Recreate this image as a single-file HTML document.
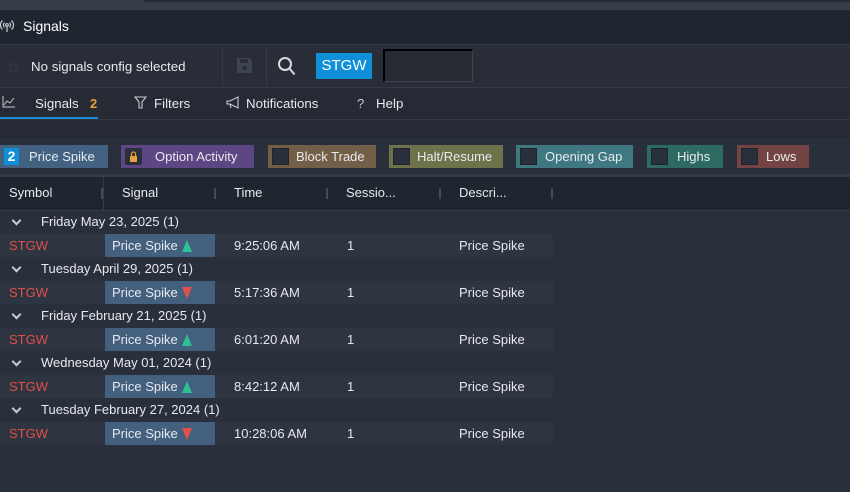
<!DOCTYPE html>
<html><head><style>
*{margin:0;padding:0;box-sizing:border-box}
body{width:850px;height:492px;background:#2a303b;font-family:"Liberation Sans",sans-serif;font-size:13px;color:#e6e9ee;position:relative;overflow:hidden}
.a{position:absolute}
.chip{position:absolute;top:145px;height:23px;line-height:23px;color:#e8ebef;font-size:13px}
.chip .b{position:absolute;left:4px;top:3px;width:17px;height:17px;background:#2a303b;border:1px solid #1f242c}
.hd{position:absolute;top:177px;height:34px;line-height:32px;font-size:13px}
.sep{position:absolute;top:188px;width:2px;height:11px;background:#454c57}
.g{position:absolute;left:0;width:850px;height:23px;line-height:22px;font-size:13px}
.g span.c{position:absolute;left:13px;top:6px;width:7px;height:7px;border-right:2px solid #c8ccd2;border-bottom:2px solid #c8ccd2;transform:rotate(45deg)}
.r{position:absolute;left:0;width:553px;height:23px;line-height:23px;background:#2e3440}
.r div{position:absolute;top:0}
.sig{left:105px;width:110px;height:23px;background:#44607f;padding-left:7px}
.up{display:inline-block;width:0;height:0;border-left:5px solid transparent;border-right:5px solid transparent;border-bottom:12px solid #2fbf95;vertical-align:-2px;margin-left:4px}
.dn{display:inline-block;width:0;height:0;border-left:5px solid transparent;border-right:5px solid transparent;border-top:12px solid #e0504a;vertical-align:-2px;margin-left:4px}
</style></head><body>
<div class="a" style="left:0;top:0;width:850px;height:10px;background:#373e49"></div>
<div class="a" style="left:144px;top:0;width:706px;height:2px;background:#262b35"></div>
<div class="a" style="left:0;top:10px;width:850px;height:34px;background:#202630"></div>
<svg class="a" style="left:0;top:19px" width="14" height="14" viewBox="0 0 14 14" fill="none" stroke="#c8ccd2" stroke-width="1.2"><circle cx="7" cy="6" r="1.3"/><path d="M7 7v6M4.5 3.5a3.5 3.5 0 0 0 0 5M9.5 3.5a3.5 3.5 0 0 1 0 5M2.5 1.5a6 6 0 0 0 0 9M11.5 1.5a6 6 0 0 1 0 9"/></svg>
<div class="a" style="left:23px;top:18px;font-size:14px;color:#fff">Signals</div>
<div class="a" style="left:0;top:44px;width:850px;height:44px;background:#282d37;border-top:1px solid #353b46;border-bottom:1px solid #353b46"></div>
<div class="a" style="left:222px;top:45px;width:1px;height:42px;background:#353b46"></div>
<div class="a" style="left:266px;top:45px;width:1px;height:42px;background:#353b46"></div>
<div class="a" style="left:6px;top:58px;color:#3d4450;font-size:17px">☆</div>
<div class="a" style="left:31px;top:59px;font-size:13.3px">No signals config selected</div>
<svg class="a" style="left:236px;top:57px" width="17" height="17" viewBox="0 0 17 17"><path d="M1 1h12l3 3v12H1z" fill="#3e4550"/><rect x="4" y="2" width="8" height="4" fill="#282d37"/><circle cx="8.5" cy="11" r="2" fill="#282d37"/></svg>
<svg class="a" style="left:277px;top:56px" width="19" height="20" viewBox="0 0 19 20" fill="none" stroke="#d8dce2" stroke-width="2"><circle cx="8" cy="8" r="6"/><path d="M12.5 12.5l5 6"/></svg>
<div class="a" style="left:316px;top:53px;width:56px;height:26px;background:#0f8fd8;color:#fff;font-size:15px;line-height:26px;text-align:center">STGW</div>
<div class="a" style="left:383px;top:49px;width:90px;height:33px;border:1px solid #3e4450;border-left:2px solid #000;border-top:2px solid #000;background:#262b34"></div>
<div class="a" style="left:0;top:88px;width:850px;height:50px;background:#252a34"></div>
<div class="a" style="left:0;top:119px;width:850px;height:1px;background:#353b46"></div>
<div class="a" style="left:0;top:117px;width:98px;height:2px;background:#1b8ad6"></div>
<svg class="a" style="left:2px;top:96px" width="13" height="12" viewBox="0 0 13 12" fill="none" stroke="#c8ccd2" stroke-width="1"><path d="M1 0v11h12M2 9l3-4 3 2 4-5"/></svg>
<div class="a" style="left:35px;top:96px;font-size:13.3px">Signals</div>
<div class="a" style="left:90px;top:96px;color:#e6a03c;font-weight:bold">2</div>
<svg class="a" style="left:134px;top:96px" width="13" height="13" viewBox="0 0 13 13" fill="none" stroke="#c8ccd2" stroke-width="1.1"><path d="M1 1h11L8 6v6H5V6z"/></svg>
<div class="a" style="left:154px;top:96px;font-size:13.3px">Filters</div>
<svg class="a" style="left:226px;top:96px" width="14" height="13" viewBox="0 0 14 13" fill="none" stroke="#c8ccd2" stroke-width="1.1"><path d="M1 5h3l8-4v11L4 8H1zM4 8l1 4"/></svg>
<div class="a" style="left:246px;top:96px;font-size:13.3px">Notifications</div>
<div class="a" style="left:357px;top:96px;color:#c8ccd2">?</div>
<div class="a" style="left:376px;top:96px;font-size:13.3px">Help</div>
<div class="chip" style="left:0;width:108px;background:#436180"><span style="position:absolute;left:4px;top:3px;width:15px;height:17px;background:#0f8fd8;color:#fff;font-weight:bold;text-align:center;line-height:17px;font-size:14px">2</span><span style="position:absolute;left:29px">Price Spike</span></div>
<div class="chip" style="left:121px;width:133px;background:#5c4684"><span style="position:absolute;left:4px;top:3px;width:17px;height:17px;background:#2a2f3a;border-radius:2px"><svg width="17" height="17" viewBox="0 0 17 17"><rect x="5" y="8" width="7" height="6" fill="#e6a03c"/><path d="M6.5 8V6a2 2 0 0 1 4 0v2" fill="none" stroke="#e6a03c" stroke-width="1.2"/></svg></span><span style="position:absolute;left:34px">Option Activity</span></div>
<div class="chip" style="left:268px;width:108px;background:#735f47"><span class="b"></span><span style="position:absolute;left:28px">Block Trade</span></div>
<div class="chip" style="left:389px;width:114px;background:#6d724a"><span class="b"></span><span style="position:absolute;left:28px">Halt/Resume</span></div>
<div class="chip" style="left:516px;width:117px;background:#3f7880"><span class="b"></span><span style="position:absolute;left:29px">Opening Gap</span></div>
<div class="chip" style="left:647px;width:76px;background:#2d6a62"><span class="b"></span><span style="position:absolute;left:30px">Highs</span></div>
<div class="chip" style="left:737px;width:72px;background:#744444"><span class="b"></span><span style="position:absolute;left:29px">Lows</span></div>
<div class="a" style="left:0;top:174px;width:850px;height:3px;background:#363c47"></div>
<div class="a" style="left:0;top:177px;width:850px;height:34px;background:#20262f;border-bottom:1px solid #363c47"></div>
<div class="a" style="left:103px;top:177px;width:1px;height:34px;background:#363c47"></div>
<div class="hd" style="left:9px">Symbol</div><div class="sep" style="left:101px"></div>
<div class="hd" style="left:122px">Signal</div><div class="sep" style="left:214px"></div>
<div class="hd" style="left:234px">Time</div><div class="sep" style="left:326px"></div>
<div class="hd" style="left:346px">Sessio...</div><div class="sep" style="left:439px"></div>
<div class="hd" style="left:459px">Descri...</div><div class="sep" style="left:551px"></div>

<div class="g" style="top:211px"><span class="c"></span><span style="position:absolute;left:41px">Friday May 23, 2025 (1)</span></div>
<div class="r" style="top:234px"><div style="left:9px;color:#e0504a">STGW</div><div class="sig">Price Spike<span class="up"></span></div><div style="left:234px">9:25:06 AM</div><div style="left:347px">1</div><div style="left:459px">Price Spike</div></div>
<div class="g" style="top:258px"><span class="c"></span><span style="position:absolute;left:41px">Tuesday April 29, 2025 (1)</span></div>
<div class="r" style="top:281px"><div style="left:9px;color:#e0504a">STGW</div><div class="sig">Price Spike<span class="dn"></span></div><div style="left:234px">5:17:36 AM</div><div style="left:347px">1</div><div style="left:459px">Price Spike</div></div>
<div class="g" style="top:305px"><span class="c"></span><span style="position:absolute;left:41px">Friday February 21, 2025 (1)</span></div>
<div class="r" style="top:328px"><div style="left:9px;color:#e0504a">STGW</div><div class="sig">Price Spike<span class="up"></span></div><div style="left:234px">6:01:20 AM</div><div style="left:347px">1</div><div style="left:459px">Price Spike</div></div>
<div class="g" style="top:352px"><span class="c"></span><span style="position:absolute;left:41px">Wednesday May 01, 2024 (1)</span></div>
<div class="r" style="top:375px"><div style="left:9px;color:#e0504a">STGW</div><div class="sig">Price Spike<span class="up"></span></div><div style="left:234px">8:42:12 AM</div><div style="left:347px">1</div><div style="left:459px">Price Spike</div></div>
<div class="g" style="top:399px"><span class="c"></span><span style="position:absolute;left:41px">Tuesday February 27, 2024 (1)</span></div>
<div class="r" style="top:422px"><div style="left:9px;color:#e0504a">STGW</div><div class="sig">Price Spike<span class="dn"></span></div><div style="left:234px">10:28:06 AM</div><div style="left:347px">1</div><div style="left:459px">Price Spike</div></div>
</body></html>
